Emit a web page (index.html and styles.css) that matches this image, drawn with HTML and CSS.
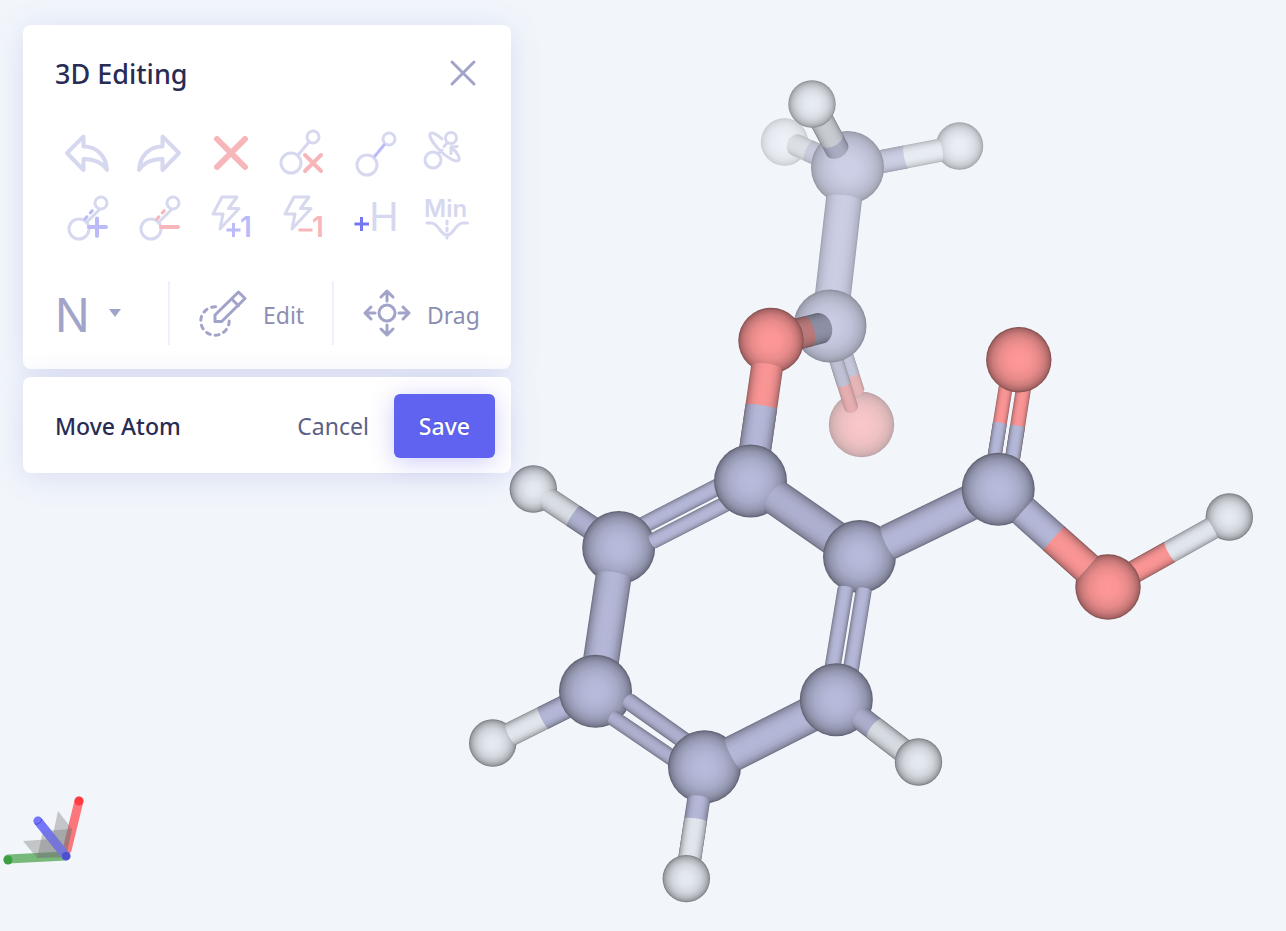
FILE: index.html
```html
<!DOCTYPE html>
<html lang="en">
<head>
<meta charset="utf-8">
<title>3D Editing</title>
<meta name="viewport" content="width=device-width, initial-scale=1">
<link rel="stylesheet" href="styles.css">
</head>
<body>
<main class="viewer">
  <svg class="scene" id="scene" viewBox="0 0 1286 931" preserveAspectRatio="xMinYMin meet" role="img" aria-label="Ball and stick model of aspirin"></svg>

  <svg class="axes" viewBox="0 0 96 96" role="img" aria-label="Orientation axes">
    <g stroke-linecap="round" stroke-width="9" fill="none">
      <path stroke="#fb777b" d="M67 55 79 6"/>
      <path stroke="#76b97b" d="M66 61 8 64"/>
    </g>
    <path stroke="#7577f8" stroke-linecap="round" stroke-width="9" d="M66 61 38 26"/>
    <g fill="#777" fill-opacity=".38">
      <path d="M66 62 72 34 58 16 52 44Z"/>
      <path d="M66 62 37 63 23 46 52 44Z"/>
      <path d="M66 62 72 34 43 36 37 63Z"/>
    </g>
    <path stroke="#7577f8" stroke-opacity=".6" stroke-linecap="round" stroke-width="9" d="M66 61 38 26"/>
    <path fill="none" stroke="#4a4cd8" stroke-width="1" d="M35 29q5 1 7-5"/>
    <circle cx="66" cy="61" r="4" fill="#4d4fcb"/>
    <circle cx="79" cy="6" r="4.5" fill="#ff3c42"/>
    <circle cx="8" cy="65" r="4.5" fill="#3d9f40"/>
  </svg>

  <aside class="tools">
    <section class="card editor" aria-labelledby="editor-title">
      <header class="editor-head">
        <h1 class="title" id="editor-title">3D Editing</h1>
        <button class="icon-button close" type="button" aria-label="Close">
          <svg class="close-icon" viewBox="0 0 28 28"><path d="M3 3 25 25M25 3 3 25"/></svg>
        </button>
      </header>

      <div class="tool-grid">
        <button class="icon-button" type="button" aria-label="Undo">
          <svg class="icon" viewBox="0 0 48 48"><path class="arrow" d="M4 24 20.5 7.500V17.500C34 17.500 43 27 44 41 38.500 32.500 31 30 20.500 30V41Z"/></svg>
        </button>
        <button class="icon-button" type="button" aria-label="Redo">
          <svg class="icon" viewBox="0 0 48 48"><path class="arrow" d="M44 24 27.500 7.500V17.500C14 17.500 5 27 4 41 9.500 32.500 17 30 27.500 30V41Z"/></svg>
        </button>
        <button class="icon-button" type="button" aria-label="Delete">
          <svg class="icon" viewBox="0 0 48 48"><path class="red heavy" d="M10 10 38 38M38 10 10 38"/></svg>
        </button>
        <button class="icon-button" type="button" aria-label="Delete bond">
          <svg class="icon" viewBox="0 0 48 48"><circle cx="34" cy="8" r="6"/><circle cx="12" cy="34" r="10"/><path d="M19 26 30 13"/><path class="red strong" d="M26 26 42 42M42 26 26 42"/></svg>
        </button>
        <button class="icon-button" type="button" aria-label="Add bond">
          <svg class="icon" viewBox="0 0 48 48"><circle cx="38" cy="10" r="6"/><circle cx="16" cy="36" r="10"/><path class="blue" d="M24 27 33 16"/></svg>
        </button>
        <button class="icon-button" type="button" aria-label="Rotate bond">
          <svg class="icon" viewBox="0 0 48 48"><circle cx="10" cy="31" r="8"/><circle cx="28" cy="9" r="5.5"/><path d="M16 24 19 21M21 17.5 24 14M19 10C14 5.500 9 3 7.500 4.500 5.500 6.500 9 13 16 20.500 23 28 32 33.500 35.500 31.500 37.500 30 35 24 29 19M28 24.500V18L34 17.500"/></svg>
        </button>
        <button class="icon-button" type="button" aria-label="Raise bond order">
          <svg class="icon" viewBox="0 0 48 48"><circle cx="38" cy="10" r="6"/><circle cx="16" cy="36" r="10"/><path d="M24 29 36 17"/><path class="blue dashed" d="M22 26 32 14.5"/><path class="blue strong" d="M26 34H43M34 25.500V43"/></svg>
        </button>
        <button class="icon-button" type="button" aria-label="Lower bond order">
          <svg class="icon" viewBox="0 0 48 48"><circle cx="38" cy="10" r="6"/><circle cx="16" cy="36" r="10"/><path d="M24 29 36 17"/><path class="red dashed" d="M22 26 32 14.5"/><path class="red strong" d="M26 34H43"/></svg>
        </button>
        <button class="icon-button" type="button" aria-label="Raise charge">
          <svg class="icon" viewBox="0 0 48 48"><path d="M15 4H30L21.500 15.500H32L13 36 16 21H6Z"/><path class="blue sign" d="M19.500 37H33.500M26.500 30V44"/><text class="blue-text digit" x="33" y="44">1</text></svg>
        </button>
        <button class="icon-button" type="button" aria-label="Lower charge">
          <svg class="icon" viewBox="0 0 48 48"><path d="M15 4H30L21.500 15.500H32L13 36 16 21H6Z"/><path class="red sign" d="M19.500 37H33.500"/><text class="red-text digit" x="33" y="44">1</text></svg>
        </button>
        <button class="icon-button" type="button" aria-label="Add hydrogens">
          <svg class="icon" viewBox="0 0 48 48"><path class="bright sign" d="M3.500 31H18M10.500 24V38"/><text class="hydrogen" x="18" y="38">H</text></svg>
        </button>
        <button class="icon-button" type="button" aria-label="Minimize">
          <svg class="icon" viewBox="0 0 48 48"><text class="min" x="1" y="24">Min</text><path d="M4 30H8C16 30 17 42 24 42S32 30 40 30H44.500M24 28V31M24 35V38M24 42V45"/></svg>
        </button>
      </div>

      <div class="modes">
        <button class="element" type="button" aria-haspopup="listbox" aria-label="Element N">
          <span class="label">N</span>
          <svg class="caret" viewBox="0 0 12 8"><path d="M0 0H12L6 8Z"/></svg>
        </button>
        <button class="mode" type="button">
          <svg class="icon mode-icon" viewBox="0 0 48 48"><path class="ring" d="M30.200 32A14.200 14.200 0 1 1 18.500 18"/><path d="M16 32.500V26L39.500 3 46 9.500 22.700 32.500ZM32.500 9.700 39.500 16.700"/></svg>
          <span class="label">Edit</span>
        </button>
        <button class="mode" type="button">
          <svg class="icon mode-icon" viewBox="0 0 48 48"><circle cx="24" cy="24" r="8"/><path d="M24 12V2M18 8 24 2 30 8M24 36V46M18 40 24 46 30 40M12 24H2M8 18 2 24 8 30M36 24H46M40 18 46 24 40 30"/></svg>
          <span class="label">Drag</span>
        </button>
      </div>
    </section>

    <section class="card actions" aria-label="Move Atom">
      <h2 class="action-title">Move Atom</h2>
      <button class="button" type="button">Cancel</button>
      <button class="button primary" type="button">Save</button>
    </section>
  </aside>
</main>
<script src="scene.js"></script>
</body>
</html>
```
FILE: styles.css
```css
* { box-sizing: border-box; }

body {
  margin: 0;
  background: #f2f6fb;
  color: #282c55;
  font-family: "Noto Sans", "Open Sans", sans-serif;
}

button {
  margin: 0;
  padding: 0;
  border: 0;
  background: none;
  color: inherit;
  font: inherit;
  cursor: pointer;
}

.viewer {
  position: relative;
  min-height: 100vh;
  padding: 25px 23px;
  overflow: hidden;
}

.scene {
  position: absolute;
  inset: 0;
  width: 100%;
  height: 100%;
}

.axes {
  position: absolute;
  left: 0;
  bottom: 40px;
  width: 96px;
  height: 96px;
}

.tools {
  position: relative;
  display: flex;
  flex-direction: column;
  gap: 8px;
  width: 100%;
  max-width: 488px;
}

.card {
  border-radius: 8px;
  background: #fff;
  box-shadow: 0 4px 32px rgba(88, 96, 200, .16);
}

.editor { padding: 24px 32px; }

.editor-head {
  display: flex;
  align-items: center;
  justify-content: space-between;
  height: 48px;
  margin-bottom: 24px;
}

.title,
.action-title {
  margin: 0;
  font-weight: 500;
}

.title { font-size: 27px; }

.icon-button {
  display: grid;
  place-items: center;
}

.close {
  width: 32px;
  height: 48px;
}

.close-icon {
  width: 28px;
  height: 28px;
  fill: none;
  stroke: #a1a4c8;
  stroke-width: 3;
  stroke-linecap: round;
}

.tool-grid {
  display: grid;
  grid-template-columns: repeat(6, 1fr);
  grid-auto-rows: 64px;
  margin: 0 -4px 32px;
}

.icon {
  width: 48px;
  height: 48px;
  flex: none;
  overflow: visible;
  fill: none;
  stroke: #d6d8ef;
  stroke-width: 3;
  stroke-linecap: round;
  stroke-linejoin: round;
}

.icon .arrow { stroke-width: 4; }
.icon .strong { stroke-width: 4; }
.icon .heavy { stroke-width: 6; }
.icon .red { stroke: #f7b6b9; }
.icon .blue { stroke: #bbbbfa; }
.icon .bright { stroke: #7476f3; }
.icon .sign { stroke-linecap: butt; }
.icon .dashed { stroke-dasharray: 3 5; }

.icon text {
  stroke: none;
  fill: #d6d8ef;
  font-family: Inter, sans-serif;
}

.icon .digit { font-size: 28px; font-weight: 600; }
.icon .blue-text { fill: #bbbbfa; }
.icon .red-text { fill: #f7b6b9; }
.icon .hydrogen { font-size: 40px; }
.icon .min { font-size: 24px; font-weight: 600; }

.modes {
  display: grid;
  grid-template-columns: 113px 164px 1fr;
  height: 64px;
  color: #8b8eb3;
  font-size: 23px;
}

.label { padding-top: 3px; }

.element {
  display: flex;
  align-items: center;
  gap: 19px;
  color: #a1a4c8;
  font-family: Inter, sans-serif;
  font-size: 46px;
}

.caret {
  width: 12px;
  height: 8px;
  fill: currentColor;
}

.mode {
  display: flex;
  align-items: center;
  gap: 16px;
  padding-left: 29px;
  border-left: 2px solid #eef1fb;
}

.mode-icon { stroke: #a1a4c8; }
.icon .ring { stroke-dasharray: 4 5; }

.actions {
  display: flex;
  align-items: center;
  padding: 17px 16px 15px 32px;
  font-size: 23px;
}

.action-title {
  flex: 1;
  font-size: 23px;
}

.button {
  height: 64px;
  padding: 0 25px;
  border-radius: 6px;
  color: #5d6085;
}

.primary {
  background: #6063f0;
  color: #fff;
  font-weight: 500;
  box-shadow: 0 4px 24px rgba(96, 90, 230, .3);
  text-shadow: 0 -1px 1px rgba(40, 40, 120, .3);
}
```
FILE: scene.js
```js
const NS = "http://www.w3.org/2000/svg";
const scene = document.getElementById("scene");
const defs = scene.appendChild(document.createElementNS(NS, "defs"));

const FOG = [242, 246, 251];
const ELEMENTS = {
  C: { color: [184, 187, 219], radius: 36.5 },
  O: { color: [255, 152, 152], radius: 32.7 },
  H: { color: [230, 234, 242], radius: 23.7 }
};

const SPHERE = [[0, 1], [0.3, 0.98], [0.6, 0.91], [0.8, 0.8], [0.93, 0.67], [1, 0.5]];
const TUBE = [[0, 0.58], [0.06, 0.76], [0.2, 0.91], [0.35, 0.97], [0.5, 0.98], [0.65, 0.97], [0.8, 0.91], [0.94, 0.76], [1, 0.58]];

function tone(element, light, fog) {
  const rgb = ELEMENTS[element].color.map((c, i) => Math.round(c * light * (1 - fog) + FOG[i] * fog));
  return `rgb(${rgb})`;
}

function draw(parent, name, attributes) {
  const node = parent.appendChild(document.createElementNS(NS, name));
  for (const key in attributes) node.setAttribute(key, attributes[key]);
  return node;
}

function gradient(kind, element, shade, fog) {
  const id = `${kind}-${element}-${shade}-${fog}`.replace(/\./g, "_");
  if (!document.getElementById(id)) {
    const tube = kind === "tube";
    const g = draw(defs, tube ? "linearGradient" : "radialGradient", tube ? { id, x1: 0, y1: 0, x2: 0, y2: 1 } : { id });
    for (const [offset, light] of tube ? TUBE : SPHERE) {
      draw(g, "stop", { offset, "stop-color": tone(element, light * shade, fog) });
    }
  }
  return `url(#${id})`;
}

function atom(element, x, y, fog = 0) {
  draw(scene, "circle", { cx: x, cy: y, r: ELEMENTS[element].radius, fill: gradient("ball", element, 1, fog) });
}

// A tube from (x1, y1) to (x2, y2). "start" and "end" are how far each end bulges,
// "split" is the distance at which the second element's colour begins.
function bond(pair, x1, y1, x2, y2, width, { start = 0, end = 0, split, bend = 2, fog = 0, shade = 1 } = {}) {
  const length = Math.hypot(x2 - x1, y2 - y1);
  const angle = Math.atan2(y2 - y1, x2 - x1) * 180 / Math.PI;
  const group = draw(scene, "g", { transform: `translate(${x1} ${y1}) rotate(${angle})` });
  const h = width / 2;
  const part = (element, from, left) => draw(group, "path", {
    d: `M${from} ${-h}H${length}A${end} ${h} 0 0 1 ${length} ${h}H${from}A${Math.abs(left)} ${h} 0 0 ${left < 0 ? 0 : 1} ${from} ${-h}Z`,
    fill: gradient("tube", element, shade, fog)
  });
  part(pair[0], 0, start);
  if (split) part(pair[1], split, bend);
}

// Acetyl group, furthest from the camera
atom("H", 784.5, 142, 0.65);
bond("HC", 796, 145, 836, 163, 22, { start: 9, split: 14, bend: 3, fog: 0.5, shade: 0.88 });
atom("H", 959.5, 146, 0.32);
bond("HC", 939.5, 150.4, 862, 165.4, 23, { start: 3, split: 34, bend: -2, fog: 0.36 });
atom("C", 847.5, 167.5, 0.36);
bond("CH", 837, 149, 814, 106, 24, { start: 9, split: 11, bend: 7, fog: 0.2, shade: 0.84 });
atom("H", 812, 104, 0.15);
bond("CC", 844, 199, 831, 312, 36, { start: 4, fog: 0.36 });
atom("O", 861.5, 424.5, 0.5);
bond("OC", 857.5, 390.5, 846, 355, 14, { start: 5, split: 17, fog: 0.42, shade: 0.9 });
bond("OC", 851, 407, 833, 350, 14, { start: 6, split: 24, fog: 0.36, shade: 0.9 });
atom("C", 830, 326, 0.3);
bond("CO", 820, 328.3, 771, 341, 31, { start: 12, split: 13, bend: 7, fog: 0.1, shade: 0.72 });

// Ester oxygen
atom("O", 771, 340.5);
bond("OC", 767, 367.5, 753, 464, 32, { start: 4, split: 40, bend: 2 });

// Ring
atom("H", 533.3, 489);
bond("HC", 549.5, 500, 602, 535, 24, { start: 8, split: 29, bend: 2, shade: 0.96 });
bond("CC", 635, 529.5, 730, 480.5, 17);
atom("C", 618.7, 547.5);
bond("CC", 653, 541, 735, 499, 16, { start: 3 });
bond("CC", 613.5, 577, 598.5, 677, 36, { start: 5 });
atom("H", 492.7, 743);
bond("HC", 511, 734, 577, 701, 24, { start: 3, split: 36, bend: 2 });
atom("C", 595.5, 691.3);
bond("CC", 629, 701.5, 697, 749.7, 17, { start: 5, shade: 0.96 });
bond("CC", 614, 718.5, 692, 771.5, 16, { start: 5, shade: 0.96 });
atom("C", 704.5, 766.8);
bond("CC", 733, 753.5, 822, 708.5, 36, { start: 3 });
bond("CH", 698.7, 799.5, 688, 870, 23, { start: 4, split: 21, bend: 2 });
atom("H", 686.3, 878.6);
atom("C", 750.5, 481);
bond("CC", 776, 497.5, 845, 545.5, 36, { start: 7, shade: 0.96 });
atom("C", 859.5, 556.5);
bond("CC", 845.5, 589, 830.5, 680, 16, { start: 3 });
bond("CC", 863.7, 590.5, 849, 681, 16, { start: 3 });
bond("CC", 889, 542, 985, 495.5, 36, { start: 4 });
atom("C", 836.3, 699.8);
bond("CH", 862, 719, 912, 757.5, 24, { start: 8, split: 16, bend: 4, shade: 0.95 });
atom("H", 918.5, 762);

// Carboxyl group
bond("OC", 1006.5, 382, 993, 466, 14, { split: 42, bend: 1 });
bond("OC", 1024.5, 382, 1010.7, 470, 15, { split: 45, bend: 1 });
atom("O", 1018.8, 359.7);
atom("C", 998.2, 489.3);
atom("H", 1229.3, 517);
bond("HO", 1212, 528.3, 1124, 577.5, 23, { start: 1, split: 48, bend: -2 });
atom("O", 1108, 587);
bond("CO", 1023, 510.7, 1087, 568, 32, { split: 41, bend: 0 });
```
